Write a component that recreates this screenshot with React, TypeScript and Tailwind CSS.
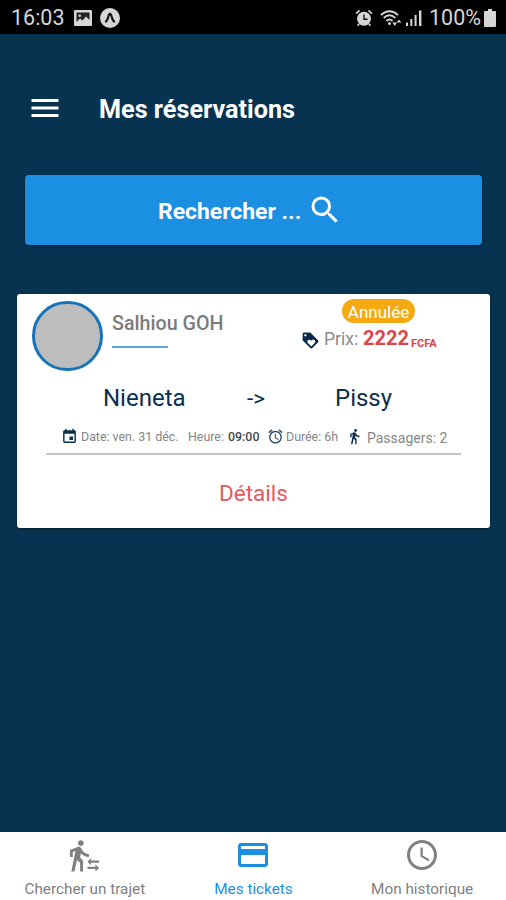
import {
  MdMenu, MdSearch, MdLoyalty, MdEvent, MdAccessAlarm, MdDirectionsWalk,
  MdTransferWithinAStation, MdCreditCard, MdSchedule,
} from "react-icons/md";

function ExpoMark() {
  return (
    <svg viewBox="0 0 20 20" className="ml-2 size-5 shrink-0">
      <circle cx="10" cy="10" r="10" fill="#d6d6d6" />
      <path d="M6 13.6Q7.6 11.8 8.4 8.6Q9 5.8 10 5.8T11.6 8.6Q12.4 11.8 14 13.6" fill="none" stroke="#111" strokeWidth="2.2" strokeLinecap="round" strokeLinejoin="round" />
    </svg>
  );
}

function Picture() {
  return (
    <svg viewBox="0 0 18 16" className="h-4 w-[18px] shrink-0">
      <rect width="18" height="16" rx="1" fill="#d6d6d6" />
      <path d="M2.5 2.5H15.5V10L12 6.5 8.5 10.5 6 8.5 2.5 12Z" fill="#222" />
      <circle cx="5.7" cy="5.7" r="1.3" fill="#d6d6d6" />
    </svg>
  );
}

function AlarmFilled() {
  return (
    <svg viewBox="0 0 18 18" className="h-[18px] w-[18px] shrink-0">
      <circle cx="9" cy="9.7" r="7" fill="#d6d6d6" />
      <path d="M1 4.6 4.6 1.4M17 4.6 13.4 1.4M4 15 2.7 16.8M14 15 15.3 16.8" stroke="#d6d6d6" strokeWidth="1.7" />
      <path d="M9 5.4V10.2H12.6" fill="none" stroke="#111" strokeWidth="1.4" />
    </svg>
  );
}

function Wifi() {
  return (
    <svg viewBox="0 0 22 18" className="ml-[7px] h-[18px] w-[22px] shrink-0" fill="none" stroke="#d6d6d6" strokeWidth="1.8">
      <path d="M1 6Q9.5-1.5 18 6M3.7 9Q9.5 3.5 15.3 9M6.4 12Q9.5 9 12.6 12" />
      <circle cx="9.5" cy="14.4" r="1.5" fill="#d6d6d6" stroke="none" />
      <path d="M12.4 13.6H17L14.7 17ZM16.6 13.6 19 10.4 21.4 13.6Z" fill="#d6d6d6" stroke="none" />
    </svg>
  );
}

function Signal() {
  return (
    <svg viewBox="0 0 17 18" className="ml-1 h-[18px] w-[17px] shrink-0" fill="#d6d6d6">
      <path d="M0 13.5h2V17H0zM4.3 10h2v7h-2zM8.6 6h2v11h-2zM13 1.5h2.4V17H13z" />
    </svg>
  );
}

function Battery() {
  return (
    <svg viewBox="0 0 12 18" className="h-[18px] w-3 shrink-0" fill="#d6d6d6">
      <path d="M4 0H8V2H11Q12 2 12 3V17Q12 18 11 18H1Q0 18 0 17V3Q0 2 1 2H4Z" />
    </svg>
  );
}

function StatusBar() {
  return (
    <div className="flex h-[34px] shrink-0 items-center bg-black pl-[11px] pr-[10px] pt-px text-[21.5px] text-[#d6d6d6]">
      <span className="w-[63px] shrink-0">16:03</span>
      <Picture />
      <ExpoMark />
      <div className="ml-auto flex items-center">
        <AlarmFilled />
        <Wifi />
        <Signal />
        <span className="ml-[6px] w-[55px] shrink-0">100%</span>
        <Battery />
      </div>
    </div>
  );
}

function TicketCard() {
  return (
    <section className="mx-[17px] mt-[49px] flex h-[234px] w-[473px] shrink-0 flex-col rounded-[3px] bg-white shadow-[0_1px_3px_rgba(0,0,0,0.4)]">
      <div className="flex h-[84px] pl-[15px] pt-[6px]">
        <div className="mt-px h-[70px] w-[71px] shrink-0 rounded-full border-[3px] border-[#1673b9] bg-[#bdbdbd]" />
        <div className="ml-[9px] w-[189px] shrink-0 pt-[12px]">
          <div className="text-[19.7px] font-medium leading-[24px] text-[#7b7b7b]">Salhiou GOH</div>
          <div className="mt-[10px] h-[2px] w-14 bg-[#5ba8de]" />
        </div>
        <div className="w-[150px] shrink-0 -mt-px">
          <div className="ml-[41px] flex h-6 w-[73px] items-center justify-center rounded-full bg-[#f5a912] pt-[3px] text-[17px] text-white">Annulée</div>
          <div className="mt-[5px] flex h-6 items-baseline text-[#8a8a8a]">
            <MdLoyalty className="mt-px size-[19px] shrink-0 self-center text-[#092b49]" />
            <span className="ml-1 w-[39px] shrink-0 pt-px text-[17.5px]">Prix:</span>
            <span className="w-[48px] shrink-0 text-[20px] font-bold text-[#e04449]">2222</span>
            <span className="relative top-[2px] text-[11px] font-bold text-[#e04449]">FCFA</span>
          </div>
        </div>
      </div>
      <div className="flex h-[40px] items-center pl-[86px] text-[24px] text-[#0b2f4d]">
        <span className="w-[144px]">Nieneta</span>
        <span className="w-[88px] text-[22.5px]">-&gt;</span>
        <span>Pissy</span>
      </div>
      <div className="mx-[29px] flex h-[37px] w-[415px] items-center whitespace-nowrap border-b-2 border-[#c4c4c4] pl-[15px] pt-[3px] text-[12.4px] text-[#858585]">
        <MdEvent className="mb-[2px] size-[17px] shrink-0 text-[#0b2f4d]" />
        <span className="ml-[3px] w-[107px] shrink-0">Date: ven. 31 déc.</span>
        <span className="w-[40px] shrink-0">Heure:</span>
        <span className="w-[39px] shrink-0 font-medium text-[#484848]">09:00</span>
        <MdAccessAlarm className="mb-px size-[17px] shrink-0 text-[#2d4e66]" />
        <span className="ml-[2px] w-[60px] shrink-0">Durée: 6h</span>
        <MdDirectionsWalk className="mb-px size-[17px] shrink-0 text-[#0b2f4d]" />
        <span className="ml-1 pt-px text-[14px]">Passagers: 2</span>
      </div>
      <button className="flex h-[73px] items-center justify-center pt-[4px] text-[22.5px] text-[#e35b60]">Détails</button>
    </section>
  );
}

export default function App() {
  return (
    <main className="flex h-[900px] w-[506px] flex-col overflow-hidden bg-[#083350] font-['Roboto',sans-serif] leading-none">
      <StatusBar />
      <header className="mt-[50px] flex h-[50px] shrink-0 items-center pl-[27px] text-white">
        <MdMenu className="mb-[2px] size-9" />
        <h1 className="ml-9 pt-px text-[25.2px] font-bold">Mes réservations</h1>
      </header>
      <button className="mx-[25px] mt-[41px] flex h-[70px] w-[457px] shrink-0 items-center rounded-[4px] bg-[#1b90e3] pl-[133px] text-white shadow-[0_1px_3px_rgba(0,0,0,0.4)]">
        <span className="w-[149px] pt-[4px] text-left text-[22.9px] font-bold">Rechercher ...</span>
        <MdSearch className="size-9" />
      </button>
      <TicketCard />
      <nav className="mt-auto grid h-[68px] shrink-0 grid-cols-3 bg-white text-[15.3px] text-[#808080]">
        <div className="flex flex-col items-center pl-px pt-[6px]">
          <MdTransferWithinAStation className="size-[35px]" />
          <span className="mt-[9px]">Chercher un trajet</span>
        </div>
        <div className="flex flex-col items-center pl-px pt-[5px] text-[#1b90e3]">
          <MdCreditCard className="size-9" />
          <span className="mt-[9px]">Mes tickets</span>
        </div>
        <div className="flex flex-col items-center pl-px pt-[5px]">
          <MdSchedule className="size-9" />
          <span className="mt-[9px]">Mon historique</span>
        </div>
      </nav>
    </main>
  );
}
